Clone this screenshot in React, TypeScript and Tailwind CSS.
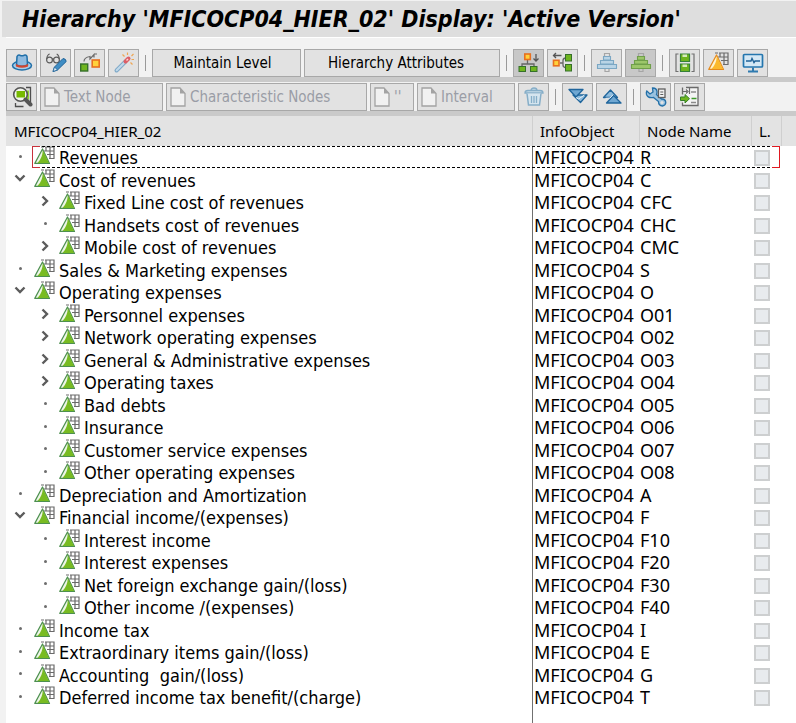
import React from 'react';
import clsx from 'clsx';

type NodeKind = 'leaf' | 'open' | 'closed';

interface HierNode {
  label: string;
  name: string;
  level: 0 | 1;
  kind: NodeKind;
}

const INFO_OBJECT = 'MFICOCP04';

const NODES: HierNode[] = [
  { label: 'Revenues', name: 'R', level: 0, kind: 'leaf' },
  { label: 'Cost of revenues', name: 'C', level: 0, kind: 'open' },
  { label: 'Fixed Line cost of revenues', name: 'CFC', level: 1, kind: 'closed' },
  { label: 'Handsets cost of revenues', name: 'CHC', level: 1, kind: 'leaf' },
  { label: 'Mobile cost of revenues', name: 'CMC', level: 1, kind: 'closed' },
  { label: 'Sales & Marketing expenses', name: 'S', level: 0, kind: 'leaf' },
  { label: 'Operating expenses', name: 'O', level: 0, kind: 'open' },
  { label: 'Personnel expenses', name: 'O01', level: 1, kind: 'closed' },
  { label: 'Network operating expenses', name: 'O02', level: 1, kind: 'closed' },
  { label: 'General & Administrative expenses', name: 'O03', level: 1, kind: 'closed' },
  { label: 'Operating taxes', name: 'O04', level: 1, kind: 'closed' },
  { label: 'Bad debts', name: 'O05', level: 1, kind: 'leaf' },
  { label: 'Insurance', name: 'O06', level: 1, kind: 'leaf' },
  { label: 'Customer service expenses', name: 'O07', level: 1, kind: 'leaf' },
  { label: 'Other operating expenses', name: 'O08', level: 1, kind: 'leaf' },
  { label: 'Depreciation and Amortization', name: 'A', level: 0, kind: 'leaf' },
  { label: 'Financial income/(expenses)', name: 'F', level: 0, kind: 'open' },
  { label: 'Interest income', name: 'F10', level: 1, kind: 'leaf' },
  { label: 'Interest expenses', name: 'F20', level: 1, kind: 'leaf' },
  { label: 'Net foreign exchange gain/(loss)', name: 'F30', level: 1, kind: 'leaf' },
  { label: 'Other income /(expenses)', name: 'F40', level: 1, kind: 'leaf' },
  { label: 'Income tax', name: 'I', level: 0, kind: 'leaf' },
  { label: 'Extraordinary items gain/(loss)', name: 'E', level: 0, kind: 'leaf' },
  { label: 'Accounting  gain/(loss)', name: 'G', level: 0, kind: 'leaf' },
  { label: 'Deferred income tax benefit/(charge)', name: 'T', level: 0, kind: 'leaf' },
];

// ---- icons ----

function Svg({ children }: { children: React.ReactNode }) {
  return (
    <svg width="22" height="22" viewBox="0 0 22 22" fill="none" aria-hidden="true" className="shrink-0">
      {children}
    </svg>
  );
}

// Shared by the tree rows (green) and the toolbar (orange).
function PyramidShape({ orange }: { orange?: boolean }) {
  return (
    <>
      <path d="M7 1h3M11 1h9v11.500h-5M12 1v4M16 1v11M10 5h10M13 8.500h7" stroke="#6a6a6a" strokeWidth="1.200" />
      <path
        d="M8.500 3 15.500 17.400H.8Z"
        fill={orange ? '#fff3cf' : '#eef6e8'}
        stroke={orange ? '#e58a1c' : '#4d9050'}
        strokeWidth="1.200"
        strokeLinejoin="round"
      />
      <path d="M8.800 4.200 15 16.900H3.500Q8.500 12 8.800 4.200Z" fill={orange ? '#fbb92c' : '#78bb22'} />
    </>
  );
}

function NodeIcon() {
  return (
    <svg width="21" height="18" viewBox="0 0 21 18" fill="none" aria-hidden="true" className="shrink-0 self-start">
      <PyramidShape />
    </svg>
  );
}

const HatIcon = () => (
  <Svg>
    <ellipse cx="11" cy="13.500" rx="9.500" ry="4.500" fill="#a9cbe6" stroke="#1f6fa8" strokeWidth="1.500" />
    <path d="M5.500 13 6 4.500q1-2 3-1.200 2 1 4 0 2.500-.8 3 1.200l.5 8.500q-5.500 2.500-11 0Z" fill="#8fbbe0" stroke="#1f6fa8" strokeWidth="1.500" />
    <path d="M5 12q6 3 12 0v2.500q-6 2.500-12 0Z" fill="#d2452f" />
  </Svg>
);

const GlassesPenIcon = () => (
  <Svg>
    <circle cx="4.500" cy="8" r="2.900" stroke="#5c5c5c" strokeWidth="1.200" />
    <circle cx="11.500" cy="8" r="2.900" stroke="#5c5c5c" strokeWidth="1.200" />
    <path d="M1.700 7q.5-4.500 3-5M14.300 7Q14 3 11.700 2M7.300 7q.7-.6 1.400 0" stroke="#5c5c5c" strokeWidth="1.100" />
    <path d="m8 19.500 1.500-4.500 8.500-8.500q3 .2 3.200 3L12.500 18Z" fill="#3f8dc4" stroke="#1f6297" />
    <path d="m8 19.500 1.500-4.500 3 3Z" fill="#dcebf6" stroke="#1f6297" strokeWidth=".8" />
  </Svg>
);

const SwapIcon = () => (
  <Svg>
    <rect x="1.700" y="12" width="7" height="7" fill="#6fb51f" stroke="#35702a" strokeWidth="1.400" />
    <rect x="13.200" y="8" width="7" height="7" fill="#ffd23c" stroke="#e8701f" strokeWidth="1.600" />
    <path d="M5 9.500q0-4 6-5V7l4-4.500v3M15.500 2H18" stroke="#6a6a6a" strokeWidth="1.200" />
  </Svg>
);

const WandIcon = () => (
  <Svg>
    <path d="m3.500 18.500 9-9" stroke="#7fa9c8" strokeWidth="4" strokeLinecap="round" />
    <path d="m3.700 18.300 9-9" stroke="#c1d9ea" strokeWidth="2" strokeLinecap="round" />
    <path d="m12.500 9.500 3-3" stroke="#dd5f66" strokeWidth="4" strokeLinecap="round" />
    <path d="m13.500 8.500 1.500-1.500" stroke="#fbd5d5" strokeWidth="1.500" />
    <path d="M9.500 2.500l2 2M14.500.5v2.500M20.500 2l-2 2M18.500 7.500H21M17.500 10.500l2 2" stroke="#efa653" strokeWidth="1.200" />
  </Svg>
);

const TreeDownIcon = () => (
  <Svg>
    <path d="M9.500 8v4M4 15v-3h12v3" stroke="#666" strokeWidth="1.300" />
    <rect x="6.800" y="2" width="5.500" height="5.500" fill="#ffd23c" stroke="#e8701f" strokeWidth="1.600" />
    <rect x="1" y="14.500" width="6.500" height="5" fill="#6fb51f" stroke="#35702a" />
    <rect x="12.500" y="14.500" width="6.500" height="5" fill="#6fb51f" stroke="#35702a" />
    <path d="M18 2v7M15.500 6.500 18 9l2.500-2.500" stroke="#555" strokeWidth="1.300" />
  </Svg>
);

const TreeLeftIcon = () => (
  <Svg>
    <path d="M8 11h3M14 6q-3 0-3 2.500V13q0 2.500 3 2.500" stroke="#666" strokeWidth="1.300" />
    <rect x="1.500" y="8.300" width="5.500" height="5.500" fill="#ffd23c" stroke="#e8701f" strokeWidth="1.600" />
    <rect x="13.500" y="2.500" width="6" height="6.500" fill="#6fb51f" stroke="#35702a" />
    <rect x="13.500" y="12.500" width="6" height="6.500" fill="#6fb51f" stroke="#35702a" />
    <path d="M9.500 3.500h-8M4 1 1.500 3.500 4 6" stroke="#555" strokeWidth="1.300" />
  </Svg>
);

function StackIcon({ fill, stroke }: { fill: string; stroke: string }) {
  return (
    <Svg>
      <path d="M8.500 5V1.500h5V5M9 17v2.500h4V17" stroke="#a5a5a5" strokeWidth="1.200" />
      <path d="M7.500 4.500h7v3.500h-7ZM4.500 8.500h13V12h-13ZM1.500 12.500h19v4h-19Z" fill={fill} stroke={stroke} strokeWidth="1.100" />
    </Svg>
  );
}

const LevelSaveIcon = () => (
  <Svg>
    <path d="M4.500 2h-2.500v17.500h2.500M17.500 2H20v17.500h-2.500" stroke="#707070" strokeWidth="1.200" />
    <path d="M6.500 2h9v7.500h-9ZM6.500 12h9v7.500h-9Z" fill="#6fb51f" stroke="#35803a" strokeWidth="1.200" />
    <path d="M8.500 2.500h4.500v2.500H8.500ZM8.500 12.500h4.500V15H8.500Z" fill="#d5ebbd" />
  </Svg>
);

const MonitorIcon = () => (
  <Svg>
    <rect x="1.500" y="2.500" width="19" height="12.500" rx="1" fill="#d4e8f5" stroke="#2476ae" strokeWidth="1.700" />
    <path d="M4 9h5l1-2.500 2 4 1-1.500h5" stroke="#1f6297" strokeWidth="1.400" />
    <path d="M11 15.500v3M6 19.500h10" stroke="#2f7bb0" strokeWidth="2" />
  </Svg>
);

const FindIcon = () => (
  <Svg>
    <path d="M15 1.500h4.500v15M4.500 17v3.500h8" stroke="#4e4e4e" strokeWidth="1.300" />
    <path d="M15.500 4.500h2.500v9h-2.500Z" fill="#8fcf35" />
    <circle cx="9.500" cy="8.500" r="6.800" fill="#f2f5ee" stroke="#555" strokeWidth="1.600" />
    <path d="M5.500 5h8.500v6.500H5.500Z" fill="#76b900" />
    <path d="m14.500 13.500 5 5" stroke="#555" strokeWidth="4" strokeLinecap="round" />
  </Svg>
);

const TrashIcon = () => (
  <Svg>
    <path d="M2 7q0-2.500 3-2.500h12q3 0 3 2.500ZM8 4.500q0-2.500 3-2.500t3 2.500" fill="#c6dbe9" stroke="#86aec8" strokeWidth="1.300" />
    <path d="M4 7.500 5.500 19h11L18 7.500" fill="#d5e5ef" stroke="#86aec8" strokeWidth="1.500" />
    <path d="M8.500 10v7M11 10v7M13.500 10v7" stroke="#86aec8" strokeWidth="1.300" />
  </Svg>
);

// Two overlapping triangles; the smaller one sits behind, offset to the side.
const ExpandIcon = () => (
  <Svg>
    <path d="M6 9h14l-6.500 7.500Z" fill="#8fbcdd" stroke="#1f659c" strokeWidth="1.300" strokeLinejoin="round" />
    <path d="M2 3.500h14L9 11Z" fill="#6fa7d2" stroke="#1f659c" strokeWidth="1.300" strokeLinejoin="round" />
    <path d="m9 11.500 2.500 1.500 6-4" stroke="#e8f1f8" strokeWidth="1" />
  </Svg>
);

const CollapseIcon = () => (
  <Svg>
    <path d="M2.500 11.500 9.500 4l7 7.500Z" fill="#8fbcdd" stroke="#1f659c" strokeWidth="1.300" strokeLinejoin="round" />
    <path d="M5.500 17 12.500 9.500l7.500 7.500Z" fill="#6fa7d2" stroke="#1f659c" strokeWidth="1.300" strokeLinejoin="round" />
    <path d="m4.500 12.300 4.500-.3 3-3.200" stroke="#e8f1f8" strokeWidth="1" />
  </Svg>
);

const WrenchIcon = () => (
  <Svg>
    <path
      d="M1.800 5 5 8l3-2-.5-4q4-.2 4.500 3.500.2 1.500-.5 3l5 4.500q4-.2 4.300 3.500-.2 3-3.300 3.500-4-.2-4-4.500L8.500 11.500Q3 12.500 1.500 8.500 1 6.500 1.800 5Z"
      fill="#9ac2df"
      stroke="#2470a8"
      strokeWidth="1.300"
    />
    <circle cx="17" cy="16.500" r="1.600" fill="#e3e3e3" />
    <rect x="13.500" y="3" width="6.500" height="8.500" fill="#f2f2f2" stroke="#5f5f5f" strokeWidth="1.300" />
    <path d="M15.300 6h3M15.300 8.500h3" stroke="#5f5f5f" />
  </Svg>
);

const TransferIcon = () => (
  <Svg>
    <path d="M3.500 8.500v-7M7 1.500h12v18H3.500v-3" fill="#f4f4f4" stroke="#6a6a6a" strokeWidth="1.300" />
    <path d="M4 5.500h4M7 3.500l2 2-2 2M10.500 2v6" stroke="#6a6a6a" strokeWidth="1.200" />
    <path d="M12 6h5M12 16.500h5" stroke="#8a8a8a" strokeWidth="1.300" />
    <path d="M12.500 12.500h5" stroke="#3c9a2a" strokeWidth="1.500" />
    <path d="M1.500 11h4.500V8.500l4.500 4.200L6 17v-2.500H1.500Z" fill="#6fb51f" stroke="#35802a" />
  </Svg>
);

const PageIcon = () => (
  <svg width="16" height="20" viewBox="0 0 16 20" aria-hidden="true" className="shrink-0">
    <path d="M1 1h9l5 5.500V19H1Z" fill="#f1f1f1" stroke="#a3a3a3" strokeWidth="1.300" />
    <path d="M10 1v5.500h5Z" fill="#a3a3a3" />
  </svg>
);

// ---- toolbar pieces ----

interface ToolButtonProps {
  title: string;
  pressed?: boolean;
  disabled?: boolean;
  children: React.ReactNode;
}

function ToolButton({ title, pressed, disabled, children }: ToolButtonProps) {
  return (
    <button
      type="button"
      title={title}
      aria-label={title}
      disabled={disabled}
      className={clsx(
        'flex h-7 w-[31px] shrink-0 items-center justify-center border border-[#a8a8a8]',
        pressed ? 'bg-[#c8c8c8]' : 'bg-[#e2e2e2]',
      )}
    >
      {children}
    </button>
  );
}

function TextButton({ label, className }: { label: string; className: string }) {
  return (
    <button
      type="button"
      className={clsx('h-7 shrink-0 border border-[#a8a8a8] bg-[#e2e2e2] whitespace-nowrap', className)}
    >
      {label}
    </button>
  );
}

function NewButton({ label, className }: { label: string; className: string }) {
  return (
    <button
      type="button"
      disabled
      className={clsx(
        'flex h-7 shrink-0 items-center gap-1 border border-[#a8a8a8] bg-[#e2e2e2] pl-[3px] whitespace-nowrap text-[#9a9da6]',
        className,
      )}
    >
      <PageIcon />
      {label}
    </button>
  );
}

const Separator = () => <span className="mx-[3px] mb-1.5 h-4 w-px shrink-0 bg-[#9a9a9a]" />;

// ---- tree ----

function Toggle({ kind, label }: { kind: NodeKind; label: string }) {
  if (kind === 'leaf') {
    return (
      <span className="flex h-5 w-7 shrink-0 items-center justify-center self-start">
        <span className="size-[3px] rounded-full bg-[#6d6d6d]" />
      </span>
    );
  }
  return (
    <button
      type="button"
      aria-label={label}
      aria-expanded={kind === 'open'}
      className="flex h-5 w-7 shrink-0 items-center justify-center self-start"
    >
      <svg width="12" height="12" viewBox="0 0 12 12" fill="none" stroke="#5c5c5c" strokeWidth="2.4" aria-hidden="true">
        <path d={kind === 'open' ? 'M1.500 2.500 6 7l4.500-4.500' : 'M3.500 1.500 8 6l-4.500 4.500'} />
      </svg>
    </button>
  );
}

// Dashed cursor frame around the focused row, with red corner brackets.
function FocusFrame() {
  return (
    <span className="pointer-events-none absolute inset-y-0 right-4 left-[26px] border-y border-dashed border-black">
      <span className="absolute -inset-y-px left-0 w-2 border-y border-l border-[#c8323c]" />
      <span className="absolute -inset-y-px right-0 w-2 border-y border-r border-[#e01820]" />
    </span>
  );
}

function TreeRow({ node, focused }: { node: HierNode; focused?: boolean }) {
  return (
    <tr className="relative odd:h-[22px] even:h-[23px]">
      <td className="p-0 font-['DejaVu_Sans_Condensed','Noto_Sans',sans-serif]">
        <div className={clsx('flex h-[22px] items-center', node.level === 1 && 'pl-[25px]')}>
          <Toggle kind={node.kind} label={node.label} />
          <NodeIcon />
          <span className="ml-1 pt-0.5 whitespace-pre">{node.label}</span>
        </div>
        {focused && <FocusFrame />}
      </td>
      <td className="border-l border-[#707070] p-0 pl-px">{INFO_OBJECT}</td>
      <td className="p-0 pl-px">{node.name}</td>
      <td className="p-0 pt-0.5 pl-[3px]">
        <input
          type="checkbox"
          disabled
          aria-label={`${node.label} link`}
          className="block size-4 appearance-none border-2 border-[#cdcfd0] bg-[#e8ebee]"
        />
      </td>
      <td className="p-0" />
    </tr>
  );
}

export default function App() {
  return (
    <div className="flex min-h-screen flex-col bg-[#f2f2f2] font-['DejaVu_Sans_Condensed','Noto_Sans',sans-serif] text-black">
      <header className="mt-px ml-0.5 flex h-9 items-center bg-[#dedede] pl-5">
        <h1 className="text-[23px] leading-8 font-bold whitespace-nowrap italic">
          Hierarchy 'MFICOCP04_HIER_02' Display: 'Active Version'
        </h1>
      </header>

      <div className="ml-1.5 flex h-[45px] items-end gap-[3px] border-t border-b-[5px] border-t-white border-b-[#cacaca] text-[15px]">
        <ToolButton title="Other Hierarchy"><HatIcon /></ToolButton>
        <ToolButton title="Display / Change"><GlassesPenIcon /></ToolButton>
        <ToolButton title="Switch Version"><SwapIcon /></ToolButton>
        <ToolButton title="Activate" disabled><WandIcon /></ToolButton>
        <Separator />
        <TextButton label="Maintain Level" className="w-[149px] pr-2" />
        <TextButton label="Hierarchy Attributes" className="w-[196px] pr-3" />
        <Separator />
        <ToolButton title="Children Below" pressed><TreeDownIcon /></ToolButton>
        <ToolButton title="Children Right"><TreeLeftIcon /></ToolButton>
        <Separator />
        <ToolButton title="Levels" disabled><StackIcon fill="#b9d4e6" stroke="#7ba7c4" /></ToolButton>
        <ToolButton title="Active Levels" pressed><StackIcon fill="#9cc66a" stroke="#6f9f4a" /></ToolButton>
        <Separator />
        <ToolButton title="Save Levels"><LevelSaveIcon /></ToolButton>
        <ToolButton title="InfoObject"><Svg><PyramidShape orange /></Svg></ToolButton>
        <ToolButton title="Monitor"><MonitorIcon /></ToolButton>
      </div>

      <div className="ml-1.5 flex h-[34px] items-end gap-[3px] border-b-[5px] border-[#cacaca] text-[15px]">
        <ToolButton title="Find"><FindIcon /></ToolButton>
        <NewButton label="Text Node" className="w-[123px]" />
        <NewButton label="Characteristic Nodes" className="w-[201px]" />
        <NewButton label="''" className="w-11" />
        <NewButton label="Interval" className="w-[98px]" />
        <ToolButton title="Delete" disabled><TrashIcon /></ToolButton>
        <Separator />
        <ToolButton title="Expand All"><ExpandIcon /></ToolButton>
        <ToolButton title="Collapse All"><CollapseIcon /></ToolButton>
        <Separator />
        <ToolButton title="Settings"><WrenchIcon /></ToolButton>
        <ToolButton title="Transfer"><TransferIcon /></ToolButton>
      </div>

      <main className="ml-1.5 grow bg-white font-['Noto_Sans',sans-serif]">
        <table className="w-full table-fixed border-separate border-spacing-0 text-lg leading-[22px]">
          <colgroup>
            <col />
            <col className="w-[107px]" />
            <col className="w-28" />
            <col className="w-[30px]" />
            <col className="w-[15px]" />
          </colgroup>
          <thead>
            <tr className="h-[30px] bg-[#e3e3e3] text-left text-[15px] whitespace-nowrap">
              <th scope="col" className="p-0 pl-2 font-normal">MFICOCP04_HIER_02</th>
              <th scope="col" className="border-l border-[#cfcfcf] p-0 pl-[7px] font-normal">InfoObject</th>
              <th scope="col" className="border-l border-[#cfcfcf] p-0 pl-[7px] font-normal">Node Name</th>
              <th scope="col" className="border-l border-[#cfcfcf] p-0 pl-[7px] font-normal">L.</th>
              <td className="border-l border-[#cfcfcf] p-0" />
            </tr>
          </thead>
          <tbody>
            {NODES.map((n, i) => (
              <TreeRow key={n.name} node={n} focused={i === 0} />
            ))}
            <tr className="h-[15px]">
              <td className="p-0" />
              <td className="border-l border-[#707070] p-0" />
              <td colSpan={3} className="p-0" />
            </tr>
          </tbody>
        </table>
      </main>
    </div>
  );
}
